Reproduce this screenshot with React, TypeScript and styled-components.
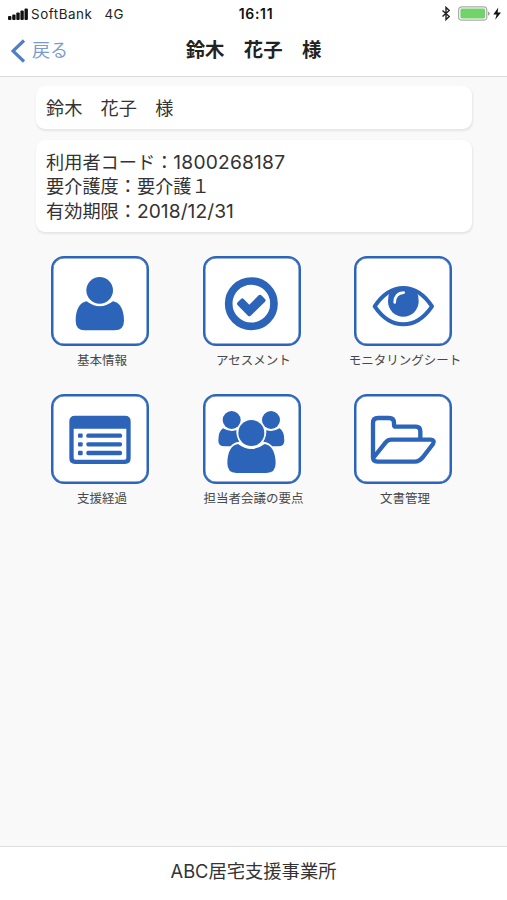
import React from 'react';
import styled, { createGlobalStyle } from 'styled-components';

const BLUE = '#2c64ba';
const FONT = 'Inter, "Noto Sans CJK JP", sans-serif';

const GlobalStyle = createGlobalStyle`
  * { box-sizing: border-box; }
  body { margin: 0; background: #f9f9f9; }
`;

const Screen = styled.div`
  display: flex;
  flex-direction: column;
  width: 507px;
  height: 900px;
  overflow: hidden;
  background: #f9f9f9;
  color: #333;
  font-family: ${FONT};
`;

const Header = styled.header`
  height: 77px;
  background: #fff;
  border-bottom: 1.5px solid #d9d9d9;
`;

const StatusBar = styled.div`
  display: grid;
  grid-template-columns: 1fr auto 1fr;
  align-items: center;
  height: 28px;
  padding: 0 5px 0 8px;
  font-size: 13.4px;
  line-height: 28px;
  color: #222;
`;

const StatusGroup = styled.div<{ $end?: boolean }>`
  display: flex;
  align-items: center;
  justify-content: ${(p) => (p.$end ? 'flex-end' : 'flex-start')};
`;

const Carrier = styled.span`
  margin-left: 3px;
  letter-spacing: 0.55px;
`;

const Network = styled.span`
  margin-left: 12px;
  letter-spacing: 0.5px;
`;

const Clock = styled.span`
  font-weight: 600;
  font-size: 14px;
  letter-spacing: 0.65px;
  color: #111;
  margin-left: 2px;
`;

const NavBar = styled.nav`
  display: grid;
  grid-template-columns: 120px 1fr 120px;
  align-items: center;
  height: 44px;
`;

const BackButton = styled.button`
  display: flex;
  align-items: center;
  gap: 6px;
  height: 44px;
  padding: 0 0 0 11px;
  border: 0;
  background: none;
  color: #7b9bd0;
  font: 400 18px/44px ${FONT};
`;

const Title = styled.h1`
  margin: 0;
  text-align: center;
  white-space: pre;
  font-size: 19.4px;
  line-height: 45px;
  font-weight: 700;
  color: #222;
`;

const Content = styled.main`
  flex: 1;
  padding-top: 9px;
`;

const Card = styled.section<{ $height: number }>`
  display: flex;
  flex-direction: column;
  justify-content: center;
  width: 436px;
  height: ${(p) => p.$height}px;
  margin: 0 0 11px 36px;
  padding: 1px 10px 0;
  border-radius: 9px;
  background: #fff;
  box-shadow: 0.5px 1.5px 2px rgba(0, 0, 0, 0.08);
`;

const Line = styled.div`
  height: 24.5px;
  line-height: 24.5px;
  font-size: 18.2px;
  white-space: pre;
`;

const Digits = styled.span<{ $spacing: number }>`
  font-size: 19.2px;
  letter-spacing: ${(p) => p.$spacing}px;
`;

const Menu = styled.div`
  display: grid;
  grid-template-columns: repeat(3, 98px);
  grid-auto-rows: 138px;
  column-gap: 53.5px;
  margin: 24px 0 0 51px;
`;

const MenuItem = styled.div`
  display: flex;
  flex-direction: column;
  align-items: center;
`;

const Tile = styled.button`
  display: block;
  width: 98px;
  height: 90px;
  padding: 0;
  border: 2px solid ${BLUE};
  border-radius: 13px;
  background: #fff;
  box-shadow: inset 0 0 0 0.5px ${BLUE};
  color: ${BLUE};
  svg { display: block; }
`;

const Label = styled.span`
  height: 20px;
  margin: 5px 0 0 4px;
  white-space: nowrap;
  font-size: 12.5px;
  line-height: 20px;
  color: #484848;
`;

const Footer = styled.footer`
  height: 54px;
  border-top: 1.5px solid #dedede;
  background: #fff;
  text-align: center;
  font-size: 18.3px;
  line-height: 48px;
`;

const Signal = () => (
  <svg width="20" height="13" viewBox="0 0 20 13" fill="#111">
    <rect x="0" y="8" width="3.4" height="4" rx="1" />
    <rect x="4.2" y="6.4" width="3.4" height="5.6" rx="1" />
    <rect x="8.3" y="4.5" width="3.4" height="7.5" rx="1" />
    <rect x="12.4" y="2.6" width="3.4" height="9.4" rx="1" />
    <rect x="16.5" y="0.5" width="3.4" height="11.5" rx="1" />
  </svg>
);

const PowerIcons = () => (
  <svg width="62" height="16" viewBox="0 0 62 16">
    <path d="M2.5 4.5 9.2 10.5 6 13.6V1.4L9.2 4.5 2.5 10.5" fill="none" stroke="#222" strokeWidth="1.4" />
    <rect x="18.6" y="0.8" width="28.2" height="13.3" rx="3.2" fill="#fff" stroke="#aaa" strokeWidth="1.2" />
    <rect x="20.4" y="2.6" width="24.6" height="9.8" rx="1.3" fill="#72d36b" />
    <path d="M48 5.4v4.4Q49.7 9.2 49.7 7.6T48 5.4Z" fill="#999" />
    <path d="M58.3 1.4 53.3 8.4h3.3l-1.4 5.4L61 6.6h-3.4Z" fill="#111" />
  </svg>
);

const Chevron = () => (
  <svg width="15" height="24" viewBox="0 0 15 24">
    <path d="M13 1.5 2 12l11 10.5" fill="none" stroke="#5080c3" strokeWidth="3.2" />
  </svg>
);

const Glyph = ({ x = 38, children }: { x?: number; children: React.ReactNode }) => (
  <svg width="94" height="86" viewBox={`${x} 24 282 258`} fill="currentColor">
    {children}
  </svg>
);

const PersonIcon = () => (
  <Glyph>
    <circle cx="178" cy="121" r="40" />
    <path d="M139 154C119 157 106 178 106 212Q106 241 133 241H223Q251 241 251 212C251 178 238 157 218 154Q178 184 139 154Z" />
  </Glyph>
);

const CheckIcon = () => (
  <Glyph x={45}>
    <circle cx="184" cy="161" r="68" fill="none" stroke="currentColor" strokeWidth="23" />
    <path d="M143 157 153 147Q157 143 161 147L178 164 206 136Q210 132 214 136L225 147Q229 151 225 155L182 197Q178 201 174 197L143 166Q139 161 143 157Z" />
  </Glyph>
);

const EyeIcon = () => (
  <Glyph x={48}>
    <path d="M104 169Q141 114 190 114T276 169Q239 223 190 223T104 169Z" fill="none" stroke="currentColor" strokeWidth="12" strokeLinejoin="round" />
    <path d="M149 127Q190 101 231 127Q236 137 236 154A46 46 0 0 1 144 154Q144 137 149 127Z" />
    <path d="M164 157Q165 129 191 128" fill="none" stroke="#fff" strokeWidth="8" strokeLinecap="round" />
  </Glyph>
);

const ListIcon = () => (
  <Glyph>
    <path fillRule="evenodd" d="M104 83H254Q271 83 271 100V211Q271 228 254 228H104Q87 228 87 211V100Q87 83 104 83ZM100 122V210Q100 215 105 215H253Q258 215 258 210V122Z" />
    {[143, 169, 195].map((y) => (
      <React.Fragment key={y}>
        <rect x="113" y={y - 6.5} width="14" height="13" rx="3" />
        <rect x="138" y={y - 6.5} width="107" height="13" rx="5" />
      </React.Fragment>
    ))}
  </Glyph>
);

const GroupIcon = () => (
  <Glyph x={45}>
    <circle cx="125" cy="96" r="27" />
    <circle cx="243" cy="96" r="27" />
    <path d="M99 121Q121 134 139 126Q138 145 148 161Q130 163 121 175H104Q85 175 85 158Q85 130 99 121Z" />
    <path d="M269 121Q247 134 229 126Q230 145 220 161Q238 163 247 175H264Q283 175 283 158Q283 130 269 121Z" />
    <circle cx="184" cy="135" r="39" />
    <path d="M144 168C124 171 112 192 112 226Q112 255 139 255H229Q257 255 257 226C257 192 244 171 224 168Q184 198 144 168Z" />
  </Glyph>
);

const FolderIcon = () => (
  <Glyph x={48}>
    <path
      d="M99 211V105Q99 90 114 90H147Q162 90 162 105V110Q162 116 168 116H228Q241 116 241 130V155M102 207 137 163Q144 155 154 155H272Q286 156 279 168L249 207Q237 221 225 221H112Q99 221 99 208"
      fill="none"
      stroke="currentColor"
      strokeWidth="13"
      strokeLinejoin="round"
    />
  </Glyph>
);

const items = [
  { label: '基本情報', Icon: PersonIcon },
  { label: 'アセスメント', Icon: CheckIcon },
  { label: 'モニタリングシート', Icon: EyeIcon },
  { label: '支援経過', Icon: ListIcon },
  { label: '担当者会議の要点', Icon: GroupIcon },
  { label: '文書管理', Icon: FolderIcon },
];

export default function App() {
  return (
    <Screen lang="ja">
      <GlobalStyle />
      <Header>
        <StatusBar>
          <StatusGroup>
            <Signal />
            <Carrier>SoftBank</Carrier>
            <Network>4G</Network>
          </StatusGroup>
          <Clock>16:11</Clock>
          <StatusGroup $end>
            <PowerIcons />
          </StatusGroup>
        </StatusBar>
        <NavBar>
          <BackButton>
            <Chevron />
            戻る
          </BackButton>
          <Title>鈴木　花子　様</Title>
        </NavBar>
      </Header>
      <Content>
        <Card $height={43}>
          <Line>鈴木　花子　様</Line>
        </Card>
        <Card $height={92}>
          <Line>利用者コード：<Digits $spacing={0.2}>1800268187</Digits></Line>
          <Line>要介護度：要介護１</Line>
          <Line>有効期限：<Digits $spacing={0.05}>2018/12/31</Digits></Line>
        </Card>
        <Menu>
          {items.map(({ label, Icon }) => (
            <MenuItem key={label}>
              <Tile aria-label={label}>
                <Icon />
              </Tile>
              <Label>{label}</Label>
            </MenuItem>
          ))}
        </Menu>
      </Content>
      <Footer>ABC居宅支援事業所</Footer>
    </Screen>
  );
}
